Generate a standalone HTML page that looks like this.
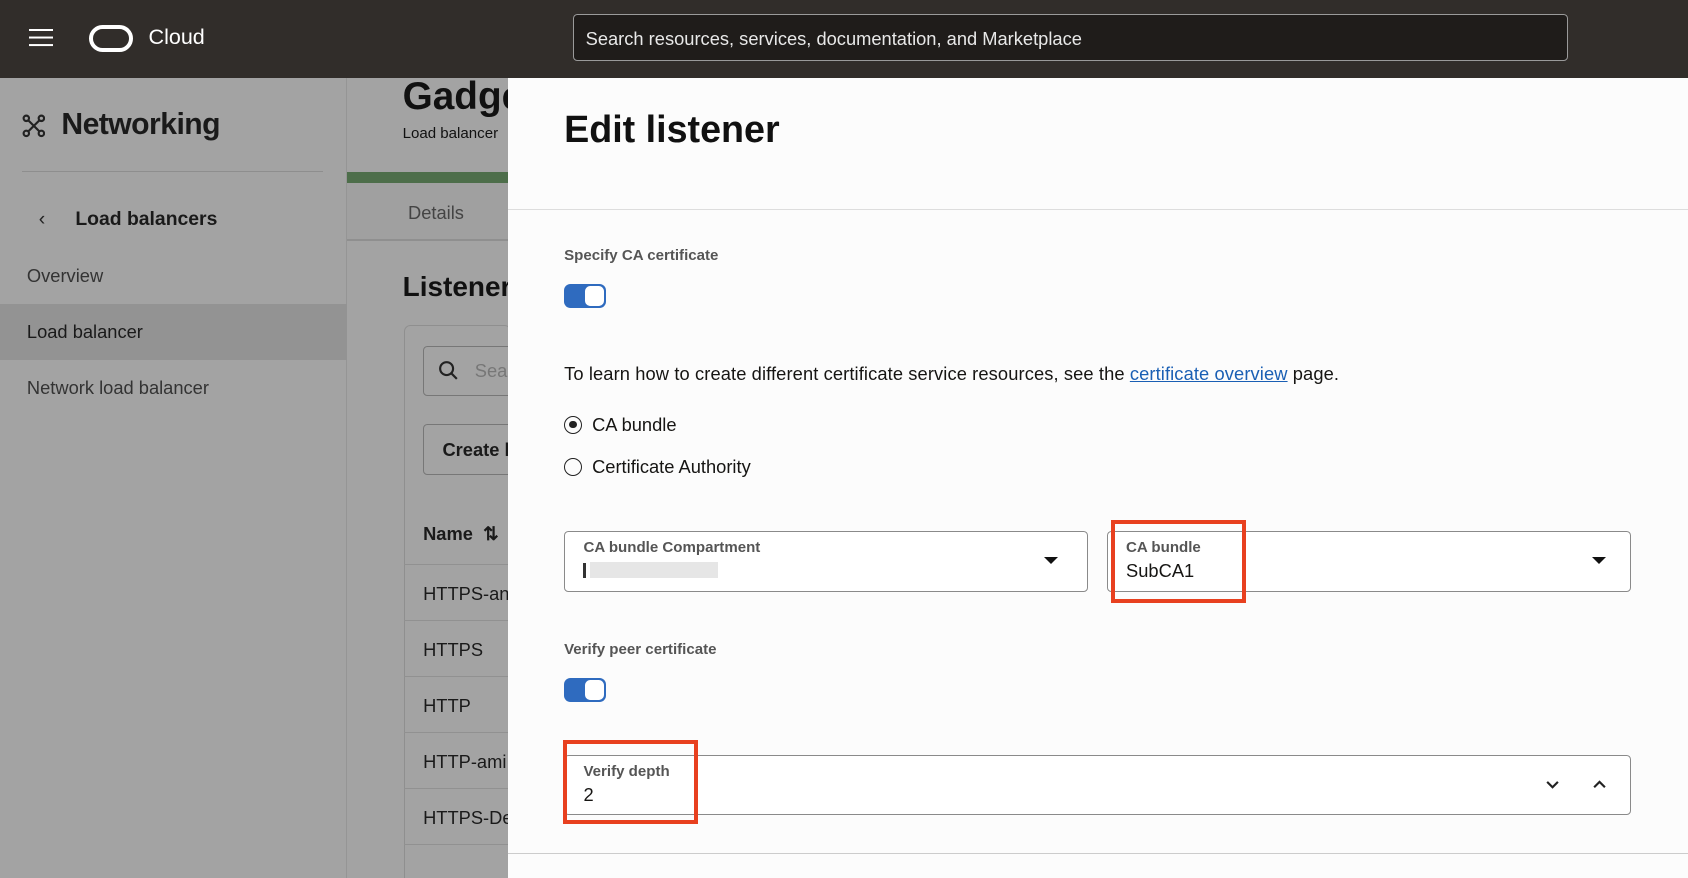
<!DOCTYPE html>
<html><head><meta charset="utf-8"><style>
*{box-sizing:border-box;margin:0;padding:0}
html,body{width:1688px;height:878px;overflow:hidden;background:#fff}
#w{zoom:1.07653;width:1568px;height:816px;position:relative;font-family:"Liberation Sans",sans-serif;overflow:hidden}
.a{position:absolute}
.top{left:0;top:0;width:1568px;height:72px;background:#312d2a}
.side{left:0;top:72px;width:322px;height:744px;background:#a3a3a3;border-right:1px solid #959595}
.main{left:322px;top:72px;width:150px;height:744px;background:#a3a3a3}
.panel{left:472px;top:72px;width:1096px;height:744px;background:#fcfcfc}
.t{position:absolute;white-space:nowrap}
.field{position:absolute;border:1px solid #8a8a8a;border-radius:4px;background:#fff}
.lab{font-size:14px;color:#555;font-weight:bold}
.toggle{position:absolute;width:39px;height:22px;border-radius:6px;background:#2f6bbf}
.toggle::after{content:"";position:absolute;right:2px;top:2px;width:18px;height:18px;border-radius:5px;background:#fff}
.red{position:absolute;border:4px solid #e8401f}
.row{position:absolute;left:375px;width:97px;border-top:1px solid #919191;height:52px;font-size:17px;color:#1a1a1a;padding:17px 0 0 18px;white-space:nowrap;overflow:hidden}
</style></head><body><div id="w">
<div class="a top"></div>
<div class="a" style="left:27px;top:27px;width:22px;height:2px;background:#fff;box-shadow:0 7px 0 #fff,0 14px 0 #fff"></div>
<div class="a" style="left:83px;top:23px;width:41px;height:25px;border:4px solid #fff;border-radius:13px"></div>
<div class="t" style="left:138px;top:23px;color:#fff;font-size:20px">Cloud</div>
<div class="a" style="left:532px;top:13px;width:925px;height:44px;border:1px solid #9a9a9a;border-radius:4px;background:#1f1c1a"></div>
<div class="t" style="left:544px;top:26px;color:#e8e8e8;font-size:17px">Search resources, services, documentation, and Marketplace</div>

<div class="a side"></div>
<svg class="a" style="left:20px;top:106px" width="22" height="22" viewBox="0 0 22 22" fill="none" stroke="#222" stroke-width="2"><circle cx="4" cy="4" r="2.5"/><circle cx="18" cy="4" r="2.5"/><circle cx="4" cy="18" r="2.5"/><circle cx="18" cy="18" r="2.5"/><path d="M6 6l10 10M16 6L6 16"/></svg>
<div class="t" style="left:57px;top:100px;font-size:28px;font-weight:bold;color:#1a1a1a;letter-spacing:-0.5px">Networking</div>
<div class="a" style="left:20px;top:159px;width:280px;height:1px;background:#8e8e8e"></div>
<div class="t" style="left:36px;top:193px;font-size:18px;color:#222">&#8249;</div>
<div class="t" style="left:70px;top:193px;font-size:18px;font-weight:bold;color:#1a1a1a">Load balancers</div>
<div class="t" style="left:25px;top:246px;font-size:17px;color:#333">Overview</div>
<div class="a" style="left:0;top:282px;width:322px;height:52px;background:#939393"></div>
<div class="t" style="left:25px;top:298px;font-size:17px;color:#1a1a1a">Load balancer</div>
<div class="t" style="left:25px;top:350px;font-size:17px;color:#333">Network load balancer</div>

<div class="a main"></div>
<div class="t" style="left:374px;top:70px;font-size:36px;font-weight:bold;color:#111">Gadge</div>
<div class="t" style="left:374px;top:116px;font-size:14px;color:#111">Load balancer</div>
<div class="a" style="left:322px;top:160px;width:150px;height:10px;background:#4d6e4a"></div>
<div class="a" style="left:322px;top:170px;width:150px;height:54px;background:#a0a0a0;border-bottom:2px solid #8f8f8f"></div>
<div class="t" style="left:379px;top:188px;font-size:17px;color:#444">Details</div>
<div class="t" style="left:374px;top:252px;font-size:26px;font-weight:bold;color:#111">Listener</div>
<div class="a" style="left:375px;top:302px;width:100px;height:520px;border:1px solid #8f8f8f;border-radius:6px"></div>
<div class="a" style="left:393px;top:321px;width:90px;height:47px;border:1px solid #777;border-radius:4px"></div>
<svg class="a" style="left:407px;top:334px" width="20" height="20" viewBox="0 0 20 20" fill="none" stroke="#222" stroke-width="2"><circle cx="8" cy="8" r="6"/><path d="M12.5 12.5l5 5"/></svg>
<div class="t" style="left:441px;top:334px;font-size:17px;color:#777">Sea</div>
<div class="a" style="left:393px;top:394px;width:90px;height:47px;border:1px solid #777;border-radius:4px"></div>
<div class="t" style="left:411px;top:408px;font-size:17px;font-weight:bold;color:#1a1a1a">Create l</div>
<div class="t" style="left:393px;top:486px;font-size:17px;font-weight:bold;color:#1a1a1a">Name &nbsp;⇅</div>
<div class="row" style="top:524px">HTTPS-an</div>
<div class="row" style="top:576px">HTTPS</div>
<div class="row" style="top:628px">HTTP</div>
<div class="row" style="top:680px">HTTP-ami</div>
<div class="row" style="top:732px">HTTPS-De</div>
<div class="row" style="top:784px"></div>

<div class="a panel"></div>
<div class="t" style="left:524px;top:100px;font-size:35px;font-weight:bold;color:#111">Edit listener</div>
<div class="a" style="left:472px;top:194px;width:1096px;height:1px;background:#ddd"></div>
<div class="t lab" style="left:524px;top:229px">Specify CA certificate</div>
<div class="toggle" style="left:524px;top:264px"></div>
<div class="t" style="left:524px;top:337px;font-size:17px;color:#161513;letter-spacing:0.1px">To learn how to create different certificate service resources, see the <span style="color:#1a5fb4;text-decoration:underline">certificate overview</span> page.</div>
<div class="a" style="left:524px;top:386px;width:17px;height:17px;border:1.5px solid #222;border-radius:50%"></div>
<div class="a" style="left:529px;top:391px;width:7px;height:7px;background:#222;border-radius:50%"></div>
<div class="t" style="left:550px;top:385px;font-size:17px;color:#161513">CA bundle</div>
<div class="a" style="left:524px;top:425px;width:17px;height:17px;border:1.5px solid #222;border-radius:50%"></div>
<div class="t" style="left:550px;top:424px;font-size:17px;color:#161513">Certificate Authority</div>

<div class="field" style="left:524px;top:493px;width:487px;height:57px"></div>
<div class="t lab" style="left:542px;top:501px">CA bundle Compartment</div>
<div class="a" style="left:542px;top:523px;width:2px;height:14px;background:#333"></div>
<div class="a" style="left:548px;top:522px;width:119px;height:15px;background:#e6e6e6"></div>
<div class="a" style="left:970px;top:517px;border:7px solid transparent;border-top:7px solid #111"></div>
<div class="field" style="left:1028px;top:493px;width:487px;height:57px"></div>
<div class="t lab" style="left:1046px;top:501px">CA bundle</div>
<div class="t" style="left:1046px;top:520px;font-size:17px;color:#161513">SubCA1</div>
<div class="a" style="left:1479px;top:517px;border:7px solid transparent;border-top:7px solid #111"></div>
<div class="red" style="left:1032px;top:483px;width:125px;height:77px"></div>

<div class="t lab" style="left:524px;top:595px">Verify peer certificate</div>
<div class="toggle" style="left:524px;top:630px"></div>
<div class="field" style="left:524px;top:701px;width:991px;height:56px"></div>
<div class="t lab" style="left:542px;top:709px">Verify depth</div>
<div class="t" style="left:542px;top:728px;font-size:17px;color:#161513">2</div>
<svg class="a" style="left:1435px;top:722px" width="14" height="14" viewBox="0 0 14 14" fill="none" stroke="#222" stroke-width="2"><path d="M2 4.5l5 5 5-5"/></svg>
<svg class="a" style="left:1479px;top:722px" width="14" height="14" viewBox="0 0 14 14" fill="none" stroke="#222" stroke-width="2"><path d="M2 9.5l5-5 5 5"/></svg>
<div class="red" style="left:523px;top:687px;width:125px;height:78px"></div>
<div class="a" style="left:472px;top:792px;width:1096px;height:1px;background:#ccc"></div>
</div></body></html>
